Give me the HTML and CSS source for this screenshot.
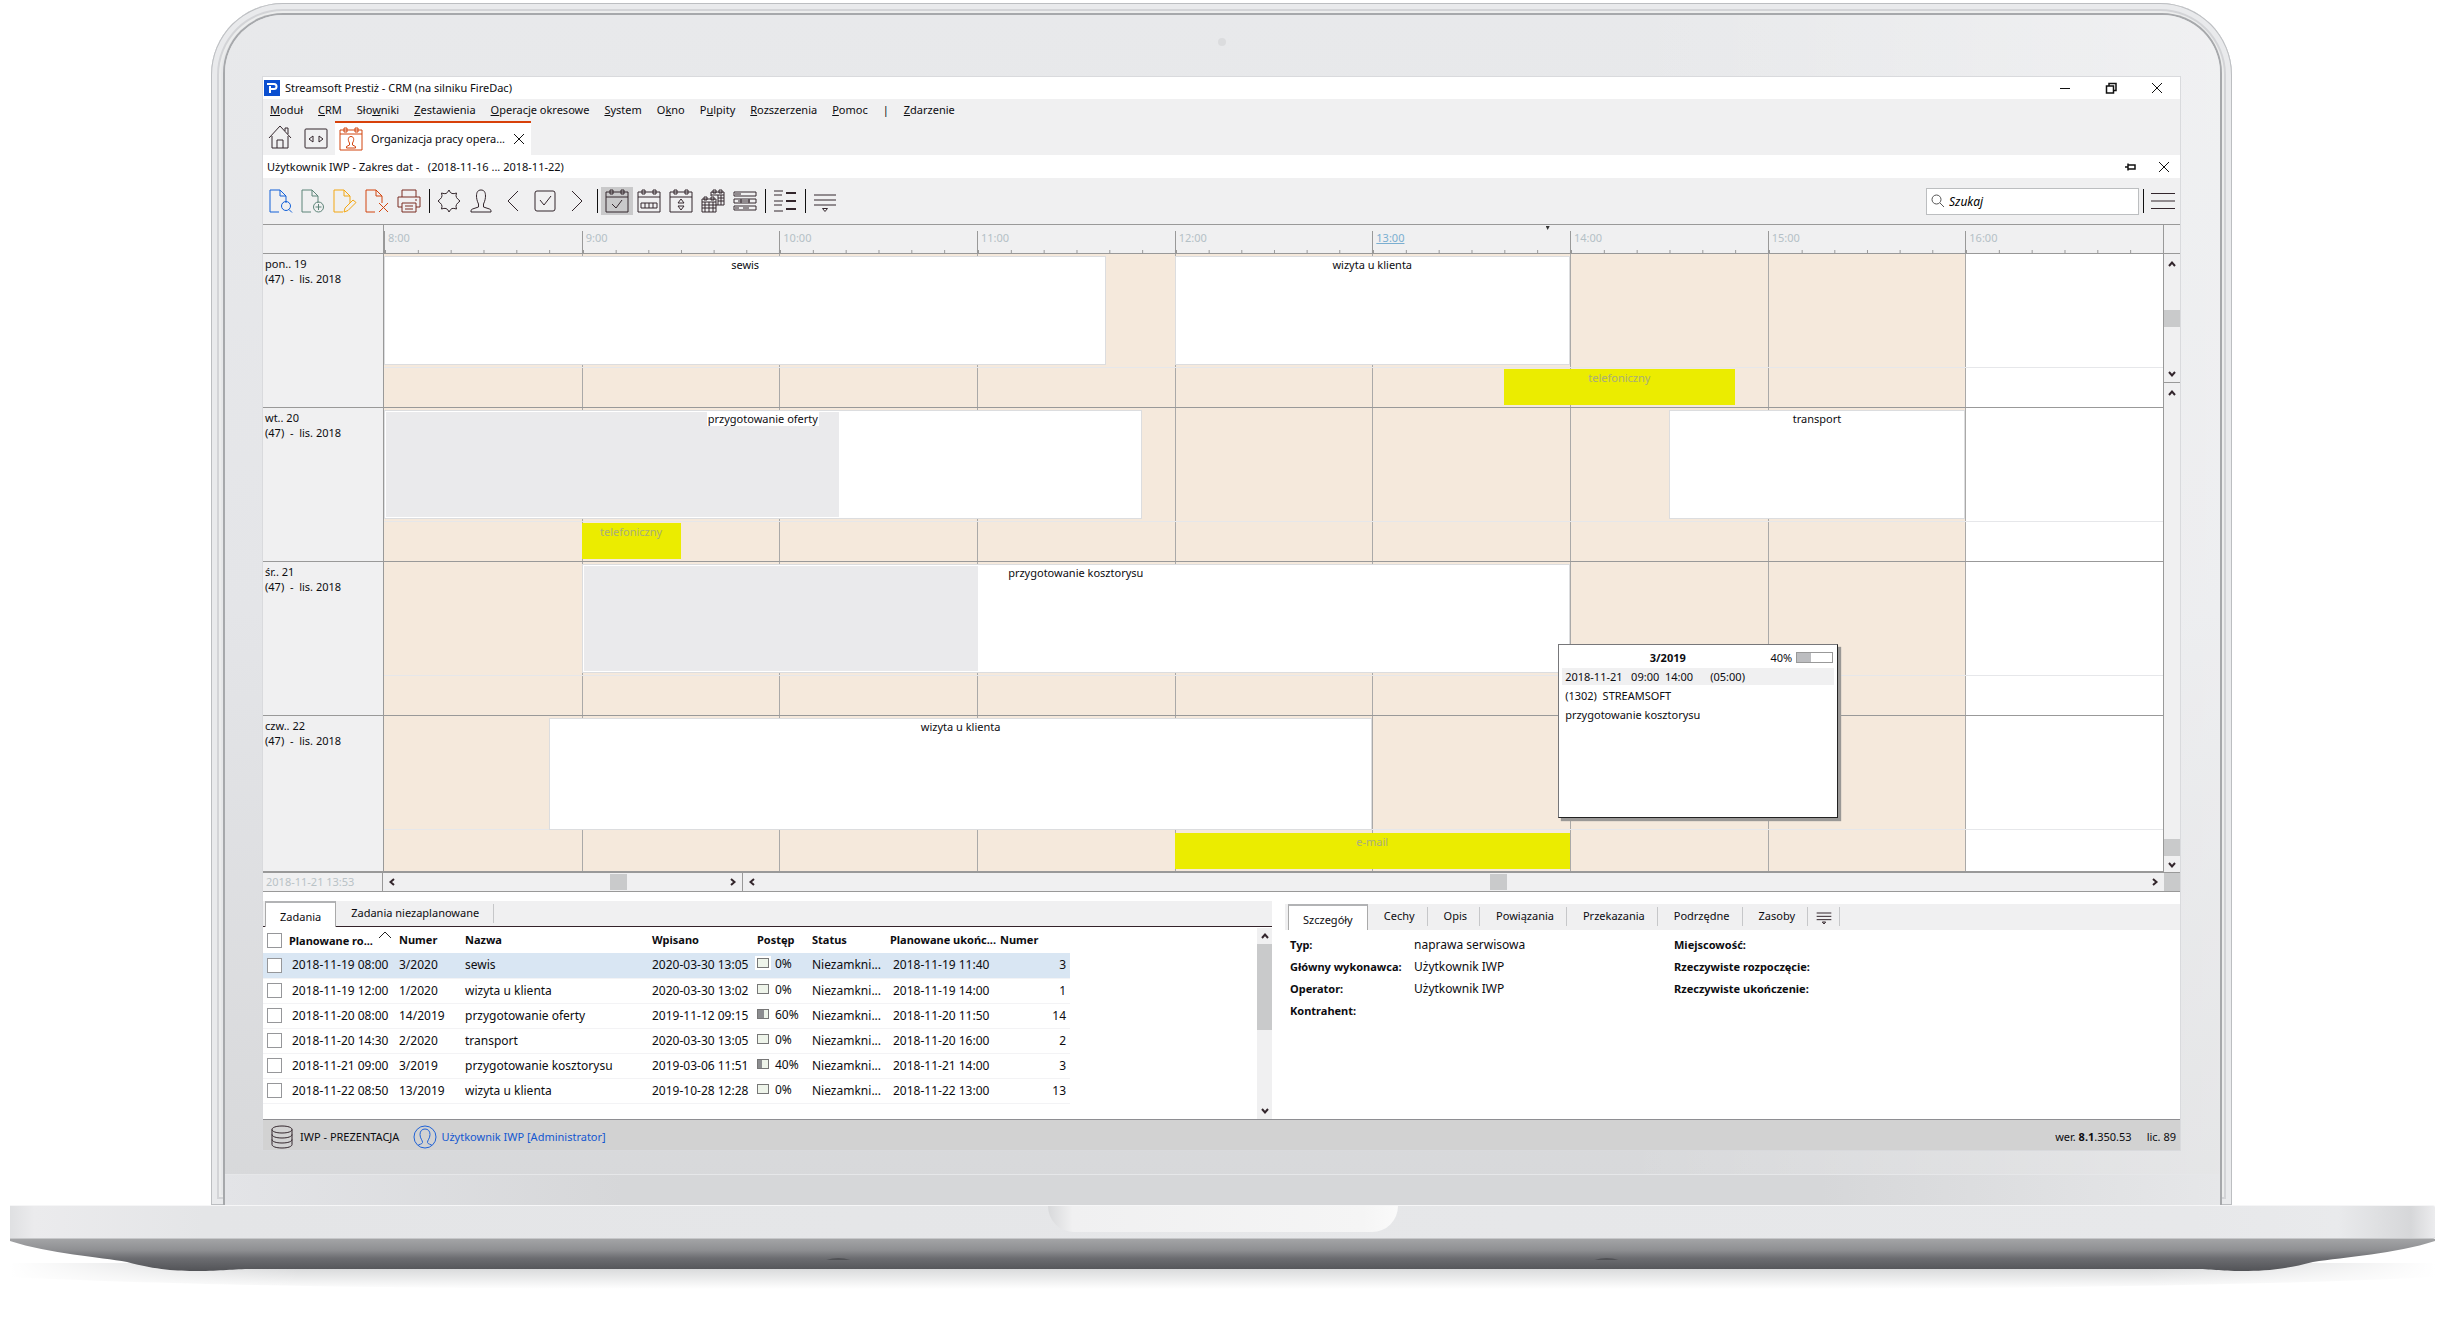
FILE: index.html
```html
<!DOCTYPE html>
<html lang="pl">
<head>
<meta charset="utf-8">
<title>Streamsoft Prestiż - CRM</title>
<link rel="stylesheet" href="styles.css">
</head>
<body>
<svg class="defs" width="0" height="0" aria-hidden="true">
  <defs>
    <symbol id="doc" viewBox="0 0 24 24"><path d="M10 23H1V1h10l6 6v7M11 1v6h6"/></symbol>
    <symbol id="cal" viewBox="0 0 24 24"><path d="M1 3h22v20H1zM1 8h22M5 1h3v4H5zM16 1h3v4h-3z"/></symbol>
    <symbol id="close" viewBox="0 0 12 12"><path d="M1 1l10 10M11 1L1 11"/></symbol>
    <symbol id="person" viewBox="0 0 24 24"><path d="M9.500 15C8 12 7.500 9 7.500 7c0-4 1.500-6 4.500-6s4.500 2 4.500 6c0 2-.5 5-2 8v3l6 2c1.500.5 1.500 1.500 1.500 3H2c0-1.500 0-2.500 1.500-3l6-2z"/></symbol>
    <symbol id="up" viewBox="0 0 8 6"><path d="M1 5l3-3.500L7 5"/></symbol>
    <symbol id="down" viewBox="0 0 8 6"><path d="M1 1l3 3.500L7 1"/></symbol>
    <symbol id="left" viewBox="0 0 6 8"><path d="M5 1L1.500 4 5 7"/></symbol>
    <symbol id="right" viewBox="0 0 6 8"><path d="M1 1l3.500 3L1 7"/></symbol>
    <symbol id="more" viewBox="0 0 24 24"><path d="M1 6h22M1 11h22M1 16h22M9.500 19.500h5L12 22.500z"/></symbol>
  </defs>
</svg>

<div class="laptop">
  <div class="lid">
    <div class="bezel">
      <div class="camera"></div>
      <main class="app">
        <header class="titlebar">
          <svg class="logo" viewBox="0 0 16 16"><path fill="#0b4fd0" d="M0 0h16v16H0z"/><path fill="none" stroke="#fff" stroke-width="2" d="M3 4h7a2.500 2.500 0 010 5H7M6 6v7"/></svg>
          <h1>Streamsoft Prestiż - CRM (na silniku FireDac)</h1>
          <div class="winbtns">
            <button aria-label="Minimalizuj"><svg class="ic" viewBox="0 0 12 12"><path d="M1 6.500h10"/></svg></button>
            <button aria-label="Przywróć"><svg class="ic bold" viewBox="0 0 12 12"><path d="M1.500 4h7v7h-7zM4 4V1.500h7v7H8.500"/></svg></button>
            <button aria-label="Zamknij"><svg class="ic"><use href="#close"/></svg></button>
          </div>
        </header>

        <nav class="menu">
          <a href="#"><u>M</u>oduł</a><a href="#"><u>C</u>RM</a><a href="#">Sło<u>w</u>niki</a><a href="#"><u>Z</u>estawienia</a><a href="#"><u>O</u>peracje okresowe</a><a href="#"><u>S</u>ystem</a><a href="#">O<u>k</u>no</a><a href="#">P<u>u</u>lpity</a><a href="#"><u>R</u>ozszerzenia</a><a href="#"><u>P</u>omoc</a><span>|</span><a href="#"><u>Z</u>darzenie</a>
        </nav>

        <div class="doctabs">
          <button class="iconbtn" aria-label="Start"><svg viewBox="0 0 24 24"><path d="M1 13L12 1l11 12M4 11v12h16V11M9 23v-8h6v8M17 6V3h3v6"/></svg></button>
          <button class="iconbtn" aria-label="Przełącz"><svg viewBox="0 0 24 24"><rect x="1" y="4" width="22" height="19" rx="1"/><path d="M9 11v6l-4-3zM15 11v6l4-3z"/></svg></button>
          <div class="doctab">
            <svg viewBox="0 0 24 24" class="orange"><path d="M1 3h22v20H1zM1 7h22M5 1h3v4H5zM16 1h3v4h-3zM10.500 16C8.500 13 9 9.500 12 9.500s3.500 3.500 1.500 6.500v2l3 1.500V21h-9v-1.500l3-1.500z"/></svg>
            <span>Organizacja pracy opera...</span>
            <button aria-label="Zamknij kartę"><svg class="ic"><use href="#close"/></svg></button>
          </div>
        </div>

        <div class="rangebar">
          <h2>Użytkownik IWP - Zakres dat - &nbsp; (2018-11-16 ... 2018-11-22)</h2>
          <button aria-label="Przypnij"><svg class="ic bold" viewBox="0 0 12 12"><path d="M1 6h3M4 2.500v7M4 4h7v4H4"/></svg></button>
          <button aria-label="Zamknij widok"><svg class="ic"><use href="#close"/></svg></button>
        </div>

        <div class="toolbar">
          <button aria-label="Podgląd"><svg viewBox="0 0 24 24" class="blue"><use href="#doc"/><circle cx="17" cy="17" r="4.500"/><path d="M20 20.500l3 3"/></svg></button>
          <button aria-label="Dodaj"><svg viewBox="0 0 24 24" class="green"><use href="#doc"/><circle cx="17.500" cy="18" r="5"/><path d="M17.500 15v6M14.500 18h6"/></svg></button>
          <button aria-label="Edytuj"><svg viewBox="0 0 24 24" class="yellow"><use href="#doc"/><path d="M11 23l1-4 8-8 3 2.500-8 8z"/></svg></button>
          <button aria-label="Usuń"><svg viewBox="0 0 24 24" class="orange"><use href="#doc"/><path d="M14 14l9 9M23 14l-9 9"/></svg></button>
          <button aria-label="Drukuj"><svg viewBox="0 0 24 24" class="brown"><path d="M5 8V1h14v7M5 18H1V8h22v10h-4M5 14h14v9H5zM8 17h8M8 20h8M18 11h2"/></svg></button>
          <i class="sep"></i>
          <button aria-label="Ustawienia"><svg viewBox="0 0 24 24"><path d="M12 1q1 3 3 3.500 2 .5 4.500-.5-1 3 0 4.500t3.500 3.500q-2.500 2-3.500 3.500t0 4.500q-3-1-4.500-.5T12 23q-1-3-3-3.500-2-.5-4.500.5 1-3 0-4.500T1 12q2.500-2 3.500-3.500t0-4.500q3 1 4.500.5T12 1z"/></svg></button>
          <button aria-label="Osoba"><svg><use href="#person"/></svg></button>
          <button aria-label="Wstecz"><svg viewBox="0 0 24 24"><path d="M17 2L7 12l10 10"/></svg></button>
          <button aria-label="Zatwierdź"><svg viewBox="0 0 24 24"><rect x="2" y="2" width="20" height="20" rx="2"/><path d="M7 11l4 5 7-9"/></svg></button>
          <button aria-label="Dalej"><svg viewBox="0 0 24 24"><path d="M7 2l10 10L7 22"/></svg></button>
          <i class="sep"></i>
          <button class="on" aria-label="Dzień"><svg viewBox="0 0 24 24"><use href="#cal"/><path d="M7 15l4 4 6-8"/></svg></button>
          <button aria-label="Tydzień"><svg viewBox="0 0 24 24"><use href="#cal"/><path d="M4 14h16v5H4zM8 14v5M12 14v5M16 14v5"/></svg></button>
          <button aria-label="Zakres"><svg viewBox="0 0 24 24"><use href="#cal"/><path d="M9 14l3-4 3 4zM9 17l3 4 3-4z"/></svg></button>
          <button aria-label="Miesiące"><svg viewBox="0 0 24 24"><path d="M10 7V3h13v13h-8M10 6h13M12 1h3v3h-3zM18 1h3v3h-3zM17 9h6M17 12h6M17 6v10M20 6v10M1 10h14v13H1zM1 13h14M3 8h3v3H3zM10 8h3v3h-3zM1 16h14M1 19h14M4 13v10M8 13v10M12 13v10"/></svg></button>
          <button aria-label="Zasoby"><svg viewBox="0 0 24 24"><path d="M1 3h22v4H1zM1 10h22v4H1zM1 17h22v4H1zM2 5h6M5 12h12M8 10v4M16 10v4M2 19h4M10 19h6"/></svg></button>
          <i class="sep"></i>
          <button aria-label="Lista"><svg viewBox="0 0 24 24"><path d="M1 2h9M1 6h8M1 12h9M1 16h8M1 22h9"/><path stroke-width="2" d="M13 4h10M13 12h10M13 20h10"/></svg></button>
          <i class="sep"></i>
          <button aria-label="Więcej"><svg><use href="#more"/></svg></button>
          <label class="search"><svg viewBox="0 0 14 14"><circle cx="5.500" cy="5.500" r="4.500"/><path d="M9 9l4 4"/></svg><input type="search" aria-label="Szukaj" placeholder="Szukaj"></label>
          <i class="sep"></i>
          <button aria-label="Menu"><svg viewBox="0 0 24 24"><path d="M0 4.500h24M0 12h24M0 19.500h24"/></svg></button>
        </div>

        <section class="schedule" aria-label="Terminarz">
          <div class="ruler">
            <div class="corner"></div>
            <div class="hours">
              <span>8:00</span><span>9:00</span><span>10:00</span><span>11:00</span><span>12:00</span><span><a href="#">13:00</a></span><span>14:00</span><span>15:00</span><span>16:00</span>
              <b class="now"></b>
            </div>
            <div class="rulerend"></div>
          </div>
          <div class="body">
            <div class="days">
              <div>pon.. 19<br>(47) &nbsp;- &nbsp;lis. 2018</div>
              <div>wt.. 20<br>(47) &nbsp;- &nbsp;lis. 2018</div>
              <div>śr.. 21<br>(47) &nbsp;- &nbsp;lis. 2018</div>
              <div>czw.. 22<br>(47) &nbsp;- &nbsp;lis. 2018</div>
            </div>
            <div class="canvas">
              <div class="lines"><i></i><i></i><i></i><i></i><i></i><i></i><i></i><i></i><i></i></div>
              <div class="lane">
                <div class="task" style="left:0%;width:40.6%"><span>sewis</span></div>
                <div class="task" style="left:44.44%;width:22.22%"><span>wizyta u klienta</span></div>
                <div class="call" style="left:62.96%;width:12.96%">telefoniczny</div>
              </div>
              <div class="lane">
                <div class="task" style="left:0%;width:42.59%"><b style="width:60%"></b><span>przygotowanie oferty</span></div>
                <div class="task" style="left:72.22%;width:16.67%"><span>transport</span></div>
                <div class="call" style="left:11.11%;width:5.56%">telefoniczny</div>
              </div>
              <div class="lane">
                <div class="task" style="left:11.11%;width:55.55%"><b style="width:40%"></b><span>przygotowanie kosztorysu</span></div>
              </div>
              <div class="lane">
                <div class="task" style="left:9.26%;width:46.3%"><span>wizyta u klienta</span></div>
                <div class="call" style="left:44.44%;width:22.22%">e-mail</div>
              </div>
              <aside class="tip">
                <div class="tiphead"><strong>3/2019</strong><span>40%</span><i class="bar"><b style="width:40%"></b></i></div>
                <div class="tiptime">2018-11-21 &nbsp; 09:00 &nbsp;14:00 &nbsp; &nbsp; &nbsp;(05:00)</div>
                <div>(1302) &nbsp;STREAMSOFT</div>
                <div>przygotowanie kosztorysu</div>
              </aside>
            </div>
            <div class="vbars">
              <div class="vbar first"><svg class="ar"><use href="#up"/></svg><i class="thumb"></i><svg class="ar"><use href="#down"/></svg></div>
              <div class="vbar second"><svg class="ar"><use href="#up"/></svg><i class="thumb"></i><svg class="ar"><use href="#down"/></svg></div>
            </div>
          </div>
          <div class="hscroll">
            <div class="stamp">2018-11-21 13:53</div>
            <div class="hbar short"><svg class="ar"><use href="#left"/></svg><i class="thumb"></i><svg class="ar"><use href="#right"/></svg></div>
            <div class="hbar long"><svg class="ar"><use href="#left"/></svg><i class="thumb"></i><svg class="ar"><use href="#right"/></svg></div>
            <div class="hend"></div>
          </div>
        </section>

        <div class="panels">
          <section class="tasks">
            <div class="tabs"><button class="sel">Zadania</button><button>Zadania niezaplanowane</button></div>
            <div class="tablewrap">
              <table>
                <colgroup><col class="c1"><col class="c2"><col class="c3"><col class="c4"><col class="c5"><col class="c6"><col class="c7"><col class="c8"><col class="c9"></colgroup>
                <thead><tr><th><input type="checkbox" aria-label="Zaznacz wszystkie"></th><th class="sorted">Planowane ro... <svg viewBox="0 0 14 8"><path d="M1 7l6-6 6 6"/></svg></th><th>Numer</th><th>Nazwa</th><th class="in">Wpisano</th><th>Postęp</th><th>Status</th><th>Planowane ukońc...</th><th>Numer</th></tr></thead>
                <tbody>
                  <tr class="cur"><td><input type="checkbox" aria-label="Zaznacz 3/2020"></td><td class="d">2018-11-19 08:00</td><td>3/2020</td><td>sewis</td><td class="d">2020-03-30 13:05</td><td class="p"><i></i>0%</td><td>Niezamkni...</td><td class="d">2018-11-19 11:40</td><td class="n">3</td></tr>
                  <tr><td><input type="checkbox" aria-label="Zaznacz 1/2020"></td><td class="d">2018-11-19 12:00</td><td>1/2020</td><td>wizyta u klienta</td><td class="d">2020-03-30 13:02</td><td class="p"><i></i>0%</td><td>Niezamkni...</td><td class="d">2018-11-19 14:00</td><td class="n">1</td></tr>
                  <tr><td><input type="checkbox" aria-label="Zaznacz 14/2019"></td><td class="d">2018-11-20 08:00</td><td>14/2019</td><td>przygotowanie oferty</td><td class="d">2019-11-12 09:15</td><td class="p"><i><b style="width:60%"></b></i>60%</td><td>Niezamkni...</td><td class="d">2018-11-20 11:50</td><td class="n">14</td></tr>
                  <tr><td><input type="checkbox" aria-label="Zaznacz 2/2020"></td><td class="d">2018-11-20 14:30</td><td>2/2020</td><td>transport</td><td class="d">2020-03-30 13:05</td><td class="p"><i></i>0%</td><td>Niezamkni...</td><td class="d">2018-11-20 16:00</td><td class="n">2</td></tr>
                  <tr><td><input type="checkbox" aria-label="Zaznacz 3/2019"></td><td class="d">2018-11-21 09:00</td><td>3/2019</td><td>przygotowanie kosztorysu</td><td class="d">2019-03-06 11:51</td><td class="p"><i><b style="width:40%"></b></i>40%</td><td>Niezamkni...</td><td class="d">2018-11-21 14:00</td><td class="n">3</td></tr>
                  <tr><td><input type="checkbox" aria-label="Zaznacz 13/2019"></td><td class="d">2018-11-22 08:50</td><td>13/2019</td><td>wizyta u klienta</td><td class="d">2019-10-28 12:28</td><td class="p"><i></i>0%</td><td>Niezamkni...</td><td class="d">2018-11-22 13:00</td><td class="n">13</td></tr>
                </tbody>
              </table>
              <div class="vbar list"><svg class="ar"><use href="#up"/></svg><i class="thumb"></i><svg class="ar"><use href="#down"/></svg></div>
            </div>
          </section>
          <section class="details">
            <div class="tabs"><button class="sel">Szczegóły</button><button>Cechy</button><button>Opis</button><button>Powiązania</button><button>Przekazania</button><button>Podrzędne</button><button>Zasoby</button><button class="moretabs" aria-label="Więcej kart"><svg><use href="#more"/></svg></button></div>
            <div class="fields">
              <dl>
                <dt>Typ:</dt><dd>naprawa serwisowa</dd>
                <dt>Główny wykonawca:</dt><dd>Użytkownik IWP</dd>
                <dt>Operator:</dt><dd>Użytkownik IWP</dd>
                <dt>Kontrahent:</dt><dd></dd>
              </dl>
              <dl>
                <dt>Miejscowość:</dt><dd></dd>
                <dt>Rzeczywiste rozpoczęcie:</dt><dd></dd>
                <dt>Rzeczywiste ukończenie:</dt><dd></dd>
              </dl>
            </div>
          </section>
        </div>

        <footer class="status">
          <svg viewBox="0 0 24 24"><path d="M2 4.500C2 2.500 6 1 12 1s10 1.500 10 3.500S18 8 12 8 2 6.500 2 4.500zM2 4.500v15C2 21.500 6 23 12 23s10-1.500 10-3.500v-15M2 9.500C2 11.500 6 13 12 13s10-1.500 10-3.500M2 14.500C2 16.500 6 18 12 18s10-1.500 10-3.500"/></svg>
          <span class="db">IWP - PREZENTACJA</span>
          <svg viewBox="0 0 24 24" class="userblue"><circle cx="12" cy="12" r="11"/><path d="M5 20.500c1-1.500 4-1 4.500-3 .3-2-2.500-4-2.500-8C7 6 9 4 12 4s5 2 5 5.500c0 4-2.800 6-2.500 8 .5 2 3.500 1.500 4.500 3"/></svg>
          <a href="#">Użytkownik IWP [Administrator]</a>
          <span class="ver">wer. <b>8.1</b>.350.53</span>
          <span>lic. 89</span>
        </footer>
      </main>
      <div class="chin"></div>
    </div>
  </div>
  <div class="deck"><div class="notch"></div></div>
  <svg class="under" viewBox="0 0 2424 56" preserveAspectRatio="none" aria-hidden="true">
    <defs>
      <linearGradient id="g1" x1="0" y1="0" x2="0" y2="1"><stop offset="0" stop-color="#a3a4a6"/><stop offset=".35" stop-color="#8e8f92"/><stop offset=".6" stop-color="#6c6d71"/><stop offset="1" stop-color="#525357"/></linearGradient>
      <linearGradient id="g2" x1="0" y1="0" x2="0" y2="1"><stop offset="0" stop-color="#cfd0d2"/><stop offset=".3" stop-color="#dddedf"/><stop offset="1" stop-color="#fff"/></linearGradient>
      <linearGradient id="g3" x1="0" y1="0" x2="1" y2="0"><stop offset="0" stop-color="#fff"/><stop offset=".12" stop-color="#fff" stop-opacity="0"/><stop offset=".88" stop-color="#fff" stop-opacity="0"/><stop offset="1" stop-color="#fff"/></linearGradient>
    </defs>
    <path fill="url(#g2)" d="M0 24h2424v14c-200 10-500 12-700 12H700C500 50 200 48 0 38z"/>
    <path fill="url(#g3)" d="M0 20h2424v34H0z"/>
    <path fill="url(#g1)" d="M0 0h2424v2c-40 13-90 16-122 21-30 8-50 9-70 9-25 0-30-2-50-2H242c-20 0-30 2-55 2-20 0-40-1-70-9C90 18 40 15 0 2z"/>
    <path fill="#505155" d="M816 21q12-4 24 0zM1584 21q12-4 24 0z"/>
  </svg>
</div>
</body>
</html>
```
FILE: styles.css
```css
* { box-sizing: border-box; }
body { margin: 0; background: #fff; color: #0c0c10; font: 11px/16px "Noto Sans", "Open Sans", sans-serif; overflow-x: hidden; }
h1, h2, dl, dd { margin: 0; font: inherit; }
button { border: 0; padding: 0; background: none; font: inherit; color: inherit; }
a { color: inherit; text-decoration: none; }
svg { display: block; flex: none; fill: none; stroke: #33262c; stroke-width: 1; }
.defs { position: absolute; }

/* laptop frame */
.laptop { padding-top: 3px; }
.lid { margin: 0 218px 0 211px; padding: 12px 12px 0 14px; overflow: hidden; border-radius: 72px 72px 0 0; background: #e6e7e9; box-shadow: inset 0 0 0 1px #bcbec1, inset 0 0 0 6px #e9eaec, inset 0 0 0 8px #d3d4d7, inset 0 0 0 10px #eceded; }
.bezel { border-radius: 58px 58px 0 0; box-shadow: 0 0 0 2px #a6a8ab; background: linear-gradient(90deg, transparent 70%, rgba(255,255,255,.35)), linear-gradient(#e8e9eb, #e4e5e8 50%, #d7d8da); padding: 23px 40px 0 38px; }
.camera { width: 8px; height: 8px; margin: 0 auto; border-radius: 4px; background: #dbdcde; }
.app { margin-top: 31px; background: #fff; outline: 1px solid #d9dadd; }
.chin { height: 31px; margin: 24px -40px 0 -38px; border-top: 1px solid #e6e7e9; background: linear-gradient(90deg, #e3e4e7, #d6d7d9 20%, #d6d7d9 80%, #e6e7e9); }
.deck { position: relative; height: 34px; margin: 0 15px 0 10px; display: flex; justify-content: center; border-radius: 0 2px 2px 0; border-top: 1px solid #f6f6f7; border-bottom: 1px solid #c6c7c9; background: linear-gradient(90deg, #dfe0e2, #ebebed 1%, #e4e5e7 8%, #e7e8ea 90%, #e9eaec 96%, #d6d7d9 99%, #ececee); }
.notch { width: 350px; height: 26px; border-radius: 0 0 30px 30px; background: linear-gradient(90deg, #d8d9db, #f0f0f1 7%, #f5f5f5 90%, #fafafa); }
.under { width: calc(100% - 25px); height: 56px; margin-left: 10px; stroke: none; }

/* window chrome */
.titlebar { display: flex; align-items: center; height: 22px; padding: 0 13px 0 1px; background: #fff; }
.logo { width: 16px; height: 16px; margin-right: 5px; stroke: none; }
.ic { width: 12px; height: 12px; stroke: #111; }
.ic.bold { stroke-width: 1.500; }
.winbtns { display: flex; gap: 34px; margin-left: auto; padding-right: 4px; }
.menu { display: flex; align-items: center; gap: 15px; height: 22px; padding-left: 7px; background: #f0f0f1; }
.doctabs { display: flex; height: 34px; background: #f0f0f1; }
.iconbtn { width: 36px; padding: 4px 6px 6px 5px; }
.iconbtn svg, .doctab > svg { width: 24px; height: 24px; }
.doctab { display: flex; align-items: center; width: 196px; padding: 0 7px 0 4px; border-top: 2px solid #d8410a; background: #fff; gap: 8px; white-space: nowrap; }
.doctab button { margin-left: auto; }
.rangebar { display: flex; align-items: center; gap: 22px; height: 23px; padding: 0 10px 0 4px; }
.rangebar h2 { flex: 1; }
.toolbar { display: flex; align-items: center; height: 47px; padding: 0 1px 0 2px; border-bottom: 1px solid #999; background: #f0f0f1; }
.toolbar button { width: 32px; height: 28px; padding: 2px 4px; flex: none; }
.toolbar svg { width: 24px; height: 24px; }
.toolbar .on { background: #c9c9ca; }
.sep { flex: none; width: 8px; height: 24px; background: linear-gradient(#111, #111) center / 1px 100% no-repeat; }
.blue { stroke: #1260d8; } .green { stroke: #5d8478; } .yellow { stroke: #f3a712; } .orange { stroke: #d2450e; } .brown { stroke: #7a2c22; }
.search { display: flex; align-items: center; width: 213px; height: 27px; margin-left: auto; padding-left: 4px; border: 1px solid #bcbec0; background: #fff; }
.toolbar .search svg { width: 14px; height: 14px; stroke: #555; }
.search input { width: 100%; min-width: 0; margin-left: 4px; padding: 0; border: 0; outline: 0; background: none; font: italic 12px "Noto Sans", sans-serif; }
.search input::placeholder { color: #000; }

/* schedule */
.ruler { display: flex; height: 29px; border-bottom: 1px solid #999; background: #f0f0f1; color: #b4c0c6; }
.corner { width: 121px; flex: none; border-right: 1px solid #999; }
.hours { position: relative; flex: 1; display: grid; grid-template-columns: repeat(9, 1fr); padding-top: 6px; }
.hours span { padding-left: 3px; line-height: 14px; border-left: 1px solid #999; background: linear-gradient(90deg, #999 1px, transparent 1px) left bottom / calc(100% / 6) 3px repeat-x; }
.hours a { color: #7aaed0; text-decoration: underline; }
.now { position: absolute; left: 65.300%; top: 1px; width: 4px; height: 4px; background: #333; clip-path: polygon(0 0, 100% 0, 50% 100%); }
.rulerend { width: 17px; border-left: 1px solid #999; }
.body { display: flex; }
.days { flex: none; width: 121px; background: #f0f0f1; border-right: 1px solid #999; line-height: 15px; }
.days div { height: 154px; padding: 2px; border-bottom: 1px solid #999; }
.days div:last-child, .lane:last-of-type { height: 156px; }
.canvas { position: relative; flex: 1; }
.lines { position: absolute; inset: 0; display: grid; grid-template-columns: repeat(9, 1fr); }
.lines i { border-left: 1px solid #aaa9a8; background: #f5e9dc; }
.lines i:first-child { border-color: transparent; }
.lines i:last-child { background: #fff; }
.lane { position: relative; height: 154px; border-bottom: 1px solid #999; background: linear-gradient(#e6e7ea, #e6e7ea) 0 113px / 100% 1px no-repeat; }
.task { position: absolute; top: 2px; height: 109px; background: #fff; border: 1px solid #dcdddf; text-align: center; line-height: 15px; }
.lane:nth-of-type(5) .task { height: 112px; }
.task b { position: absolute; left: 1px; top: 1px; bottom: 1px; background: #eaeaec; }
.task span { position: relative; padding: 0 1px; background: #fff; }
.call { position: absolute; bottom: 2px; height: 36px; background: #ebec00; color: #a9ad7c; text-align: center; line-height: 18px; }
.tip { position: absolute; left: 66%; top: 390px; width: 280px; height: 174px; padding: 4px 3px; border: 1px solid #77777a; border-right-color: #222; border-bottom-color: #222; background: #fff; box-shadow: 3px 3px 1px #9a9896; line-height: 17px; }
.tip div { padding: 0 3px; margin-bottom: 2px; }
.tip .tiphead { display: flex; align-items: center; padding-right: 1px; }
.tiphead strong { flex: 1; text-align: center; }
.bar { width: 37px; height: 11px; margin-left: 4px; border: 1px solid #999; display: flex; }
.bar b { background: #bcbdc0; }
.tip .tiptime { background: #f0f0f1; }
.vbars { width: 17px; flex: none; display: flex; flex-direction: column; border-left: 1px solid #999; }
.vbar { display: flex; flex-direction: column; align-items: center; background: #f0f0f1; padding: 6px 0; width: 100%; }
.ar { width: 8px; height: 8px; stroke-width: 2; }
.thumb { flex: none; background: #c9cacb; }
.vbar .thumb { width: 100%; height: 17px; }
.vbar .ar:last-child { margin-top: auto; }
.vbar.first { height: 129px; padding-bottom: 4px; border-bottom: 1px solid #999; }
.first .thumb { margin-top: 42px; }
.vbar.second { flex: 1; padding-bottom: 3px; }
.second .thumb { margin-top: auto; }
.vbar.second .ar:last-child { margin-top: 5px; }
.hscroll { display: flex; height: 20px; border-top: 1px solid #999; border-bottom: 1px solid #999; color: #b9c2c6; line-height: 18px; }
.stamp { width: 120px; padding-left: 3px; background: #f0f0f1; border-right: 1px solid #999; }
.hbar { display: flex; align-items: center; padding: 0 5px; background: #f0f0f1; }
.hbar .thumb { width: 17px; height: 16px; }
.short { width: 360px; border-right: 1px solid #999; }
.short .thumb { margin: 0 auto 0 214px; }
.long { flex: 1; }
.long .thumb { margin: 0 auto 0 52%; }
.hend { width: 16px; background: #c9cacb; }

/* bottom panels */
.panels { display: flex; gap: 13px; align-items: flex-start; padding-top: 9px; }
.tasks { width: 1009px; flex: none; }
.tabs { display: flex; height: 26px; background: #f0f0f1; }
.tasks .tabs { background: linear-gradient(#33232a, #33232a) 0 25px / 100% 1px no-repeat #f0f0f1; padding-left: 2px; }
.tabs button { position: relative; padding: 0 15px; padding-bottom: 3px; }
.tabs button:not(.sel)::after { content: ""; position: absolute; right: 0; top: 3px; bottom: 4px; border-right: 1px solid #c6c7c9; }
.tabs .sel { padding: 4px 14px 0; border: 1px solid #aaa; border-top: 2px solid #b2b3b5; border-bottom: 0; background: #fff; }
.tablewrap { display: flex; justify-content: space-between; align-items: flex-start; height: 192px; }
table { table-layout: fixed; width: 807px; border-collapse: collapse; font-size: 12px; line-height: 18px; }
.c1 { width: 24px; } .c2 { width: 110px; } .c3 { width: 66px; } .c4 { width: 184px; } .c5 { width: 108px; } .c6 { width: 55px; } .c7 { width: 78px; } .c8 { width: 110px; } .c9 { width: 72px; }
th, td { height: 25px; padding: 0 0 0 2px; text-align: left; white-space: nowrap; }
th { height: 26px; font-size: 11px; }
td { border-bottom: 1px solid #f3f3f5; }
.sorted svg { display: inline-block; width: 14px; height: 8px; margin: 0 0 6px 2px; stroke: #222; }
.in { padding-left: 5px; }
td.d { padding-left: 5px; }
td.n { text-align: right; padding-right: 4px; }
.cur td { background: #d9e6f3; }
td.p { padding-bottom: 2px; }
td i { display: inline-block; width: 12px; height: 10px; margin: 0 6px 0 0; border: 1px solid #777; background: #eef4ea; }
.cur i { outline: 2px solid #fff; }
td i b { display: block; height: 8px; background: #8c8d90; }
input[type=checkbox] { appearance: none; display: block; width: 15px; height: 15px; margin: 0 0 0 2px; border: 1px solid #96979a; background: #fff; }
.vbar.list { width: 15px; height: 191px; margin-top: 1px; padding: 4px 0; }
.vbar.list .thumb { height: 86px; margin-top: 4px; }
.details { flex: 1; margin-top: 3px; }
.details .tabs { padding-left: 3px; }
.details .tabs button { padding: 0 13px 3px 16px; }
.details .tabs .sel { padding: 4px 14px 0; }
.details .tabs .moretabs { padding: 0 8px; }
.moretabs svg { width: 16px; height: 16px; stroke-width: 1.500; }
.fields { display: grid; grid-template-columns: 384px 1fr; padding: 4px 0 0 5px; }
dl { display: grid; grid-template-columns: 124px 1fr; grid-auto-rows: 22px; line-height: 22px; }
.fields dl + dl { grid-template-columns: 200px 1fr; }
dt { font-weight: bold; }
dd { font-size: 12px; }
.status { display: flex; align-items: center; height: 31px; padding: 4px 4px 0 7px; border-top: 1px solid #8e8e92; background: #d2d2d2; }
.status svg { width: 24px; height: 24px; flex: none; }
.status .userblue { stroke: #1f62d6; }
.status a { color: #1257d0; margin-left: 4px; }
.db { margin: 0 14px 0 6px; }
.ver { margin: 0 15px 0 auto; }
```
